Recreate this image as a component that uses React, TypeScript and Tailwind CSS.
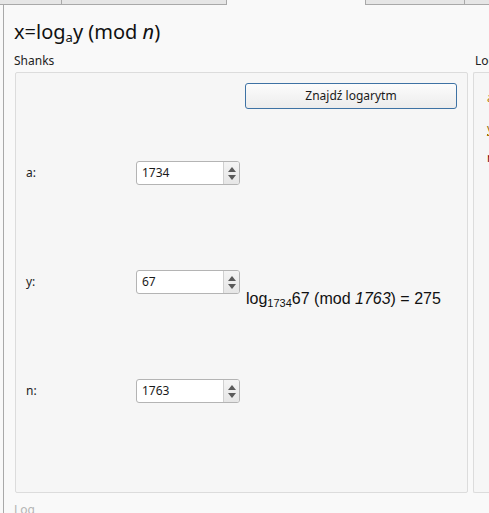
import React from 'react'

const ui = { fontFamily: '"Noto Sans", "Open Sans", sans-serif' }
const math = { fontFamily: '"Liberation Sans", Arial, sans-serif' }

function SpinBox({ value }: { value: string }) {
    return (
        <div className="flex h-[24px] w-[104px] overflow-hidden rounded-[3px] border border-[#b4b4b4] bg-white">
            <div className="flex flex-1 items-center pl-[5px] text-[12px] text-[#1a1a1a]" style={ui}>{value}</div>
            <div className="flex w-[16px] flex-col items-center justify-center gap-[3px] border-l border-[#d0d0d0] bg-gradient-to-b from-[#f4f4f4] to-[#e6e6e6]">
                <svg width="8" height="5" viewBox="0 0 8 5"><path d="M0 5L4 0L8 5Z" fill="#5a5a5a" /></svg>
                <svg width="8" height="5" viewBox="0 0 8 5"><path d="M0 0L8 0L4 5Z" fill="#5a5a5a" /></svg>
            </div>
        </div>
    )
}

export default function App() {
    return (
        <div className="h-[513px] w-[489px] overflow-hidden bg-[#f9f9f9]">
            {/* tab strip */}
            <div className="flex h-[5px]">
                <div className="w-[62px] border-b border-r border-[#a9a9a9] bg-[#e6e6e6]" />
                <div className="w-[165px] border-b border-r border-[#a9a9a9] bg-[#e6e6e6]" />
                <div className="w-[138px]" />
                <div className="w-[100px] border-b border-l border-r border-[#a9a9a9] bg-[#e6e6e6]" />
                <div className="flex-1 border-b border-[#a9a9a9] bg-[#e6e6e6]" />
            </div>
            <div className="ml-[3px] flex h-[508px] flex-col border-l border-[#a9a9a9] pl-[10px]">
                <div className="mt-[15px] h-[24px] text-[20px] leading-[24px] text-[#111]" style={ui}>
                    x=log<sub className="text-[13px]">a</sub>y (mod <i>n</i>)
                </div>
                <div className="flex gap-[5px]">
                    <div className="flex w-[454px] flex-col">
                        <div className="mt-[8px] h-[17px] text-[12px] leading-[17px] text-[#222]" style={ui}>Shanks</div>
                        <div className="ml-[1px] mt-[3px] flex h-[421px] flex-col rounded-[2px] border border-[#dcdcdc] bg-[#f6f6f6]">
                            <div className="flex justify-end pr-[10px] pt-[10px]">
                                <button className="h-[26px] w-[212px] rounded-[3px] border border-[#3e72a4] bg-gradient-to-b from-[#fcfcfc] to-[#ececec] text-[12px] text-[#1a1a1a]" style={ui}>
                                    Znajdź logarytm
                                </button>
                            </div>
                            <div className="mt-[52px] flex h-[24px] items-center">
                                <span className="w-[120px] pl-[10px] text-[12px] text-[#222]" style={ui}>a:</span>
                                <SpinBox value="1734" />
                            </div>
                            <div className="mt-[85px] flex h-[24px] items-start">
                                <span className="flex h-[24px] w-[120px] items-center pl-[10px] text-[12px] text-[#222]" style={ui}>y:</span>
                                <SpinBox value="67" />
                                <div className="ml-[6px] mt-[19px] whitespace-nowrap text-[16px] leading-[20px] text-[#111]" style={math}>
                                    log<sub className="text-[11px]">1734</sub>67 (mod <i>1763</i>) = 275
                                </div>
                            </div>
                            <div className="mt-[85px] flex h-[24px] items-center">
                                <span className="w-[120px] pl-[10px] text-[12px] text-[#222]" style={ui}>n:</span>
                                <SpinBox value="1763" />
                            </div>
                        </div>
                        <div className="mt-[8px] text-[12px] leading-[17px] text-[#b4b4b4]" style={ui}>Log</div>
                    </div>
                    <div className="flex flex-1 flex-col overflow-hidden">
                        <div className="ml-[2px] mt-[8px] h-[17px] whitespace-nowrap text-[12px] leading-[17px] text-[#222]" style={ui}>Log</div>
                        <div className="mt-[3px] flex h-[421px] flex-col gap-[12px] overflow-hidden rounded-l-[2px] border-y border-l border-[#dcdcdc] bg-[#f6f6f6] pl-[13px] pt-[16px] text-[12px] leading-[17px]" style={ui}>
                            <span className="whitespace-nowrap text-[#b07800]">a = 1734</span>
                            <span className="mt-[2px] whitespace-nowrap text-[#9a6a00] underline">y = 67</span>
                            <span className="whitespace-nowrap text-[#7a0a0a]">n = 1763</span>
                        </div>
                    </div>
                </div>
            </div>
        </div>
    )
}
